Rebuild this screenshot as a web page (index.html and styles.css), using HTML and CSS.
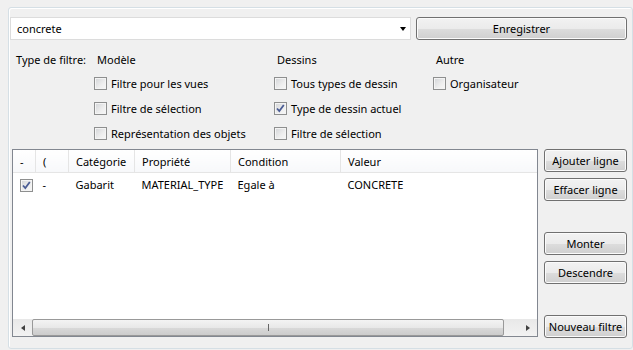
FILE: index.html
```html
<!DOCTYPE html>
<html lang="fr">
    <head>
        <meta charset="UTF-8">
        <title>Filtre</title>
        <link rel="stylesheet" href="styles.css">
    </head>
    <body>
        <div class="frame">

            <!-- Nom du filtre + enregistrer -->
            <div class="top-row">
                <div class="combo">
                    <span>concrete</span>
                    <span class="combo-arrow"></span>
                </div>
                <button class="btn save-btn">Enregistrer</button>
            </div>

            <!-- Types de filtre -->
            <div class="filter-grid">
                <div class="type-label">Type de filtre:</div>
                <div class="group-title">Modèle</div>
                <div class="group-title">Dessins</div>
                <div class="group-title">Autre</div>

                <div></div>
                <label class="check"><span class="box"></span>Filtre pour les vues</label>
                <label class="check"><span class="box"></span>Tous types de dessin</label>
                <label class="check"><span class="box"></span>Organisateur</label>

                <div></div>
                <label class="check"><span class="box"></span>Filtre de sélection</label>
                <label class="check"><span class="box checked"><svg viewBox="0 0 11 11"><path d="M2 5.5 L4.3 8 L8.8 2"/></svg></span>Type de dessin actuel</label>
                <div></div>

                <div></div>
                <label class="check"><span class="box"></span>Représentation des objets</label>
                <label class="check"><span class="box"></span>Filtre de sélection</label>
                <div></div>
            </div>

            <!-- Lignes du filtre -->
            <div class="bottom-row">
                <div class="list">
                    <table class="rules">
                        <thead>
                            <tr>
                                <th class="c1">-</th>
                                <th class="c2">(</th>
                                <th class="c3">Catégorie</th>
                                <th class="c4">Propriété</th>
                                <th class="c5">Condition</th>
                                <th class="c6">Valeur</th>
                            </tr>
                        </thead>
                        <tbody>
                            <tr>
                                <td class="c1"><span class="box checked"><svg viewBox="0 0 11 11"><path d="M2 5.5 L4.3 8 L8.8 2"/></svg></span></td>
                                <td>-</td>
                                <td>Gabarit</td>
                                <td>MATERIAL_TYPE</td>
                                <td>Egale à</td>
                                <td>CONCRETE</td>
                            </tr>
                        </tbody>
                    </table>
                    <div class="list-space"></div>
                    <div class="hscroll">
                        <span class="arrow-left"></span>
                        <div class="track">
                            <div class="thumb"><span class="grip"></span></div>
                        </div>
                        <span class="arrow-right"></span>
                    </div>
                </div>

                <div class="side-buttons">
                    <button class="btn">Ajouter ligne</button>
                    <button class="btn">Effacer ligne</button>
                    <button class="btn gap-big">Monter</button>
                    <button class="btn">Descendre</button>
                    <button class="btn gap-big">Nouveau filtre</button>
                </div>
            </div>

        </div>
    </body>
</html>
```

FILE: styles.css
```css
body {
    margin: 0;
    background-color: #f0f0f0;
    font-family: "Noto Sans", "Open Sans", sans-serif;
    font-size: 11px;
    color: #000;
}

.frame {
    margin: 7px 0 0 8px;
    width: 620px;
    height: 331px;
    border: 1px solid #d5dfe5;
    border-radius: 3px;
    box-shadow: inset 1px 1px 0 #fff;
    padding: 9px 2px 0 1px;
    box-sizing: content-box;
}

.top-row {
    display: flex;
    gap: 5px;
    height: 23px;
}

.combo {
    width: 389px;
    height: 21px;
    background-color: #fff;
    border: 1px solid #dcdcdc;
    display: flex;
    align-items: center;
    justify-content: space-between;
    padding: 0 4px 0 6px;
    box-sizing: content-box;
}

.combo-arrow {
    width: 0;
    height: 0;
    border-left: 3.5px solid transparent;
    border-right: 3.5px solid transparent;
    border-top: 4px solid #000;
}

.btn {
    font-family: inherit;
    font-size: 11px;
    color: #000;
    border: 1px solid #707070;
    border-radius: 3px;
    background: linear-gradient(#f2f2f2 0%, #ebebeb 50%, #dddddd 51%, #cfcfcf 100%);
    box-shadow: inset 0 0 0 1px #fbfbfb;
    padding: 0;
    height: 23px;
}

.save-btn {
    width: 211px;
}

.filter-grid {
    display: grid;
    grid-template-columns: 78px 180px 159px auto;
    grid-template-rows: 24px 25px 25px 25px;
    margin: 7px 0 0 6px;
    align-items: center;
}

.group-title {
    padding-left: 3px;
}

.check {
    display: flex;
    align-items: center;
    gap: 4px;
}

.box {
    width: 11px;
    height: 11px;
    border: 1px solid #8e8f8f;
    background: linear-gradient(135deg, #d2d4d7 0%, #eeeeee 60%, #f8f8f8 100%);
    box-shadow: inset 0 0 0 1px #f4f4f4;
    display: inline-flex;
    flex: none;
}

.box svg {
    width: 11px;
    height: 11px;
}

.box svg path {
    fill: none;
    stroke: #4a5c94;
    stroke-width: 1.8;
}

.bottom-row {
    display: flex;
    gap: 6px;
    margin-top: 3px;
    margin-left: 2px;
}

.list {
    width: 524px;
    height: 186px;
    border: 1px solid #828790;
    background-color: #fff;
    display: flex;
    flex-direction: column;
}

.rules {
    border-collapse: collapse;
    width: 100%;
    table-layout: fixed;
}

.rules th {
    font-weight: normal;
    text-align: left;
    height: 22px;
    padding: 0 0 0 7px;
    background: linear-gradient(#ffffff, #f7f8fa);
    border-bottom: 1px solid #e5e5e5;
    border-right: 1px solid #e5e5e5;
}

.rules th.c6 {
    border-right: none;
}

.rules td {
    height: 22px;
    padding: 0 0 0 7px;
    white-space: nowrap;
    overflow: hidden;
}

.rules .c1 { width: 15px; }
.rules .c2 { width: 25px; }
.rules .c3 { width: 58px; }
.rules .c4 { width: 88px; }
.rules .c5 { width: 102px; }

.rules td.c1 {
    padding-left: 7px;
}

.rules td .box {
    vertical-align: middle;
}

.list-space {
    flex: 1;
}

.hscroll {
    height: 17px;
    display: flex;
    align-items: center;
    background: linear-gradient(#e8e8e8, #f2f2f2);
}

.arrow-left,
.arrow-right {
    width: 19px;
    display: flex;
    justify-content: center;
    flex: none;
}

.arrow-left::before {
    content: "";
    border-top: 3.5px solid transparent;
    border-bottom: 3.5px solid transparent;
    border-right: 4px solid #404040;
}

.arrow-right::before {
    content: "";
    border-top: 3.5px solid transparent;
    border-bottom: 3.5px solid transparent;
    border-left: 4px solid #404040;
}

.track {
    flex: 1;
    height: 100%;
}

.thumb {
    width: 470px;
    height: 15px;
    margin-top: 0;
    border: 1px solid #999;
    border-radius: 2px;
    background: linear-gradient(#f3f3f3 0%, #e8e8e8 50%, #d9d9d9 51%, #cccccc 100%);
    display: flex;
    justify-content: center;
    align-items: center;
}

.grip {
    width: 1px;
    height: 7px;
    background-color: #666;
}

.side-buttons {
    display: flex;
    flex-direction: column;
    width: 83px;
}

.side-buttons .btn {
    margin-bottom: 6px;
}

.side-buttons .gap-big {
    margin-top: 25px;
}
```
